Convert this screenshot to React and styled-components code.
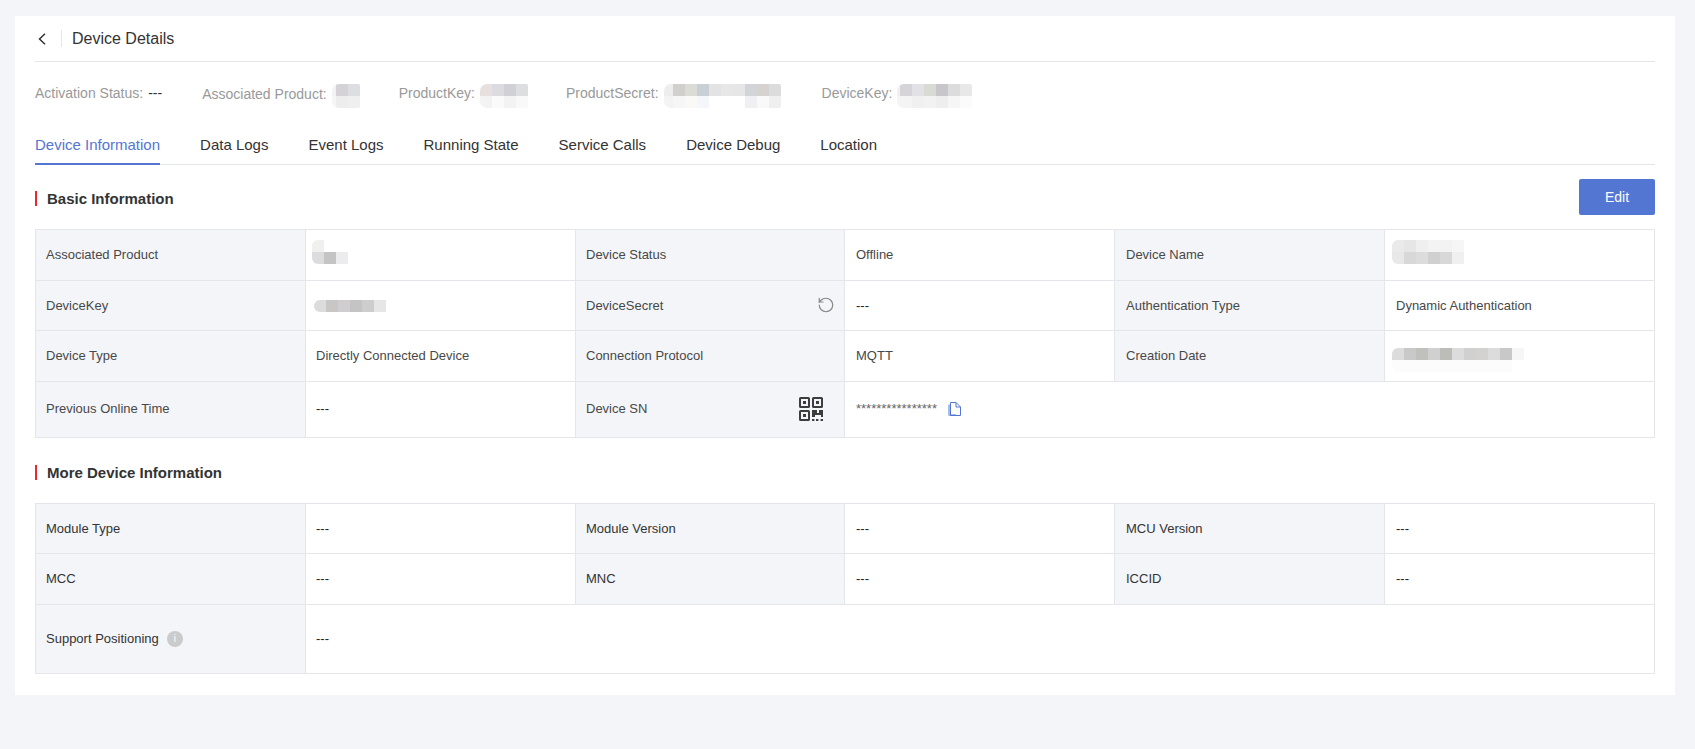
import React from "react";
import styled, { createGlobalStyle } from "styled-components";
import { RotateCcw } from "lucide-react";

const LINE = "#e4e6ec";
const BLUE = "#5476d3";

const TABS = [
  "Device Information",
  "Data Logs",
  "Event Logs",
  "Running State",
  "Service Calls",
  "Device Debug",
  "Location",
];

// pixelated regions of the screenshot, one colour per 12px cell
const BLUR = {
  metaProduct: [
    ["#f2f2f2", "#d4d2d4", "#dcdee2"],
    ["#f5f5f5", "#ededed", "#efefef"],
  ],
  metaProductKey: [
    ["#e8e0de", "#dcdce0", "#d0d0d6", "#dddee0"],
    ["#f3f3f3", "#fafafa", "#f3f3f3", "#f9f9f9"],
  ],
  metaSecret: [
    ["#ededed", "#d2d0ce", "#dcdcd6", "#c9cfd4", "#e3e3e5", "#e7e7e7", "#e6e6e6", "#d2d4d8", "#d6d2d0", "#dcdcdc"],
    ["#f3f3f3", "#f6f6f6", "#faf9f7", "#f4f6f9", "#ffffff", "#ffffff", "#ffffff", "#f0f0f2", "#f9f9f9", "#efefef"],
  ],
  metaDeviceKey: [
    ["#f0f0f0", "#d6d4d8", "#e2e2e6", "#d8dad4", "#c8c6ca", "#dcdcdc", "#e8e8e8"],
    ["#f4f4f4", "#f4f4f4", "#f0f0f0", "#f2f2f2", "#eeeeee", "#f6f6f6", "#fbfbfb"],
  ],
  product: [
    ["#f0f0ee", "#ffffff", "#ffffff"],
    ["#dcdcdf", "#c4c4c4", "#ececee"],
  ],
  deviceKey: [["#dcdcdc", "#c9c6c6", "#cfcdd0", "#c4c4c4", "#cdcdcd", "#e6e6e6"]],
  deviceName: [
    ["#eaeaea", "#e6e6e6", "#efefef", "#f3f3f3", "#f3f3f3", "#f6f6f6"],
    ["#e8e8e8", "#d8d8d8", "#dcdcdc", "#d0d0d0", "#d8d8d8", "#f0f0f0"],
  ],
  created: [
    ["#dcdcdc", "#c9c9c9", "#c0c0bc", "#d0d0d0", "#bcbcb8", "#dcdcdc", "#d0d0d0", "#d4d2d0", "#dcdcdc", "#c8c8c8", "#f6f6f6"],
    ["#fcfcfc", "#fcfcfc", "#fcfcfc", "#fcfcfc", "#fcfcfc", "#fcfcfc", "#fcfcfc", "#fcfcfc", "#fcfcfc", "#fcfcfc", "#ffffff"],
  ],
};

// crop trims pixels off the left cell, the regions don't all start on a full one
const Mosaic = ({ rows, crop = 0, className }) => {
  const width = rows[0].length * 12 - crop;
  const height = rows.length * 12;
  return (
    <MosaicSvg className={className} width={width} height={height} viewBox={`${crop} 0 ${width} ${height}`}>
      {rows.map((row, y) =>
        row.map((fill, x) => (
          <rect key={`${x}-${y}`} x={x * 12} y={y * 12} width="12" height="12" fill={fill} />
        ))
      )}
    </MosaicSvg>
  );
};

const QrIcon = () => (
  <QrSvg viewBox="0 0 24 24">
    <g fill="none" stroke="#3d3d3d" strokeWidth="2">
      <rect x="1" y="1" width="9" height="9" rx="0.6" />
      <rect x="14" y="1" width="9" height="9" rx="0.6" />
      <rect x="1" y="14" width="9" height="9" rx="0.6" />
    </g>
    <g fill="#3d3d3d">
      <rect x="4" y="4" width="3" height="3" />
      <rect x="17" y="4" width="3" height="3" />
      <rect x="4" y="17" width="3" height="3" />
      <path d="M13 13h5v3h2v-3h4v7h-2v-2h-6v2h-3z" />
      <rect x="13" y="22" width="2.4" height="2" />
      <rect x="17" y="22" width="2.4" height="2" />
      <rect x="21.6" y="22" width="2.4" height="2" />
    </g>
  </QrSvg>
);

const CopyIcon = () => (
  <CopySvg viewBox="0 0 13 14">
    <path d="M0 2.5h2.5V12H8v2H1a1 1 0 0 1-1-1z" fill="#a9bbea" />
    <path d="M2.5 .5H8l4.5 4.5v8.500H2.500z" fill="none" stroke={BLUE} />
    <path d="M8 .5V5h4.500" fill="none" stroke={BLUE} />
  </CopySvg>
);

const BackIcon = () => (
  <BackSvg viewBox="0 0 8 12">
    <path d="M7 .7 1.500 6 7 11.300" fill="none" stroke="#333" strokeWidth="1.500" />
  </BackSvg>
);

const App = () => {
  return (
    <>
      <GlobalStyle />
      <Card>
        <Header>
          <BackIcon />
          <HeaderDivider />
          <Title>Device Details</Title>
        </Header>

        <Meta>
          <MetaItem>
            <MetaLabel>Activation Status:</MetaLabel>
            <MetaValue>---</MetaValue>
          </MetaItem>
          <MetaItem $push={1}>
            <MetaLabel $drop>Associated Product:</MetaLabel>
            <MetaBlur rows={BLUR.metaProduct} crop={8} />
          </MetaItem>
          <MetaItem>
            <MetaLabel>ProductKey:</MetaLabel>
            <MetaBlur rows={BLUR.metaProductKey} />
          </MetaItem>
          <MetaItem $push={-1}>
            <MetaLabel>ProductSecret:</MetaLabel>
            <MetaBlur rows={BLUR.metaSecret} crop={3} />
          </MetaItem>
          <MetaItem $push={2}>
            <MetaLabel>DeviceKey:</MetaLabel>
            <MetaBlur rows={BLUR.metaDeviceKey} crop={9} />
          </MetaItem>
        </Meta>

        <Tabs>
          {TABS.map((tab, i) => (
            <Tab key={tab} $active={i === 0}>
              {tab}
            </Tab>
          ))}
        </Tabs>

        <SectionBar>
          <SectionTitle $inBar>Basic Information</SectionTitle>
          <EditButton>Edit</EditButton>
        </SectionBar>

        <Table $rows="51px 50px 51px 56px" $ink="#484848">
          <Label>Associated Product</Label>
          <Value>
            <CellBlur rows={BLUR.product} $left={-4} $top={-5} />
          </Value>
          <Label>Device Status</Label>
          <Value $far>Offline</Value>
          <Label $far>Device Name</Label>
          <Value $far $end>
            <CellBlur rows={BLUR.deviceName} $left={-4} $top={-5} />
          </Value>

          <Label>DeviceKey</Label>
          <Value>
            <CellBlur rows={BLUR.deviceKey} $left={-2} $top={2} />
          </Value>
          <Label>
            DeviceSecret
            <RefreshIcon size={18} strokeWidth={1.6} />
          </Label>
          <Value $far>
            <Dash>---</Dash>
          </Value>
          <Label $far>Authentication Type</Label>
          <Value $far $end>
            Dynamic Authentication
          </Value>

          <Label>Device Type</Label>
          <Value>Directly Connected Device</Value>
          <Label>Connection Protocol</Label>
          <Value $far>MQTT</Value>
          <Label $far>Creation Date</Label>
          <Value $far $end>
            <CellBlur rows={BLUR.created} $left={-4} $top={9} />
          </Value>

          <Label $lift>Previous Online Time</Label>
          <Value $lift>
            <Dash>---</Dash>
          </Value>
          <Label $lift>
            Device SN
            <QrIcon />
          </Label>
          <Value $far $lift $span={3} $end>
            <Masked>****************</Masked>
            <CopyIcon />
          </Value>
        </Table>

        <SectionTitle>More Device Information</SectionTitle>

        <Table $rows="50px 51px 69px" $tight $ink="#333">
          <Label>Module Type</Label>
          <Value>
            <Dash>---</Dash>
          </Value>
          <Label>Module Version</Label>
          <Value $far>
            <Dash>---</Dash>
          </Value>
          <Label $far>MCU Version</Label>
          <Value $far $end>
            <Dash>---</Dash>
          </Value>

          <Label>MCC</Label>
          <Value>
            <Dash>---</Dash>
          </Value>
          <Label>MNC</Label>
          <Value $far>
            <Dash>---</Dash>
          </Value>
          <Label $far>ICCID</Label>
          <Value $far $end>
            <Dash>---</Dash>
          </Value>

          <Label>
            Support Positioning
            <InfoDot>i</InfoDot>
          </Label>
          <Value $span={5} $end>
            <Dash>---</Dash>
          </Value>
        </Table>
      </Card>
    </>
  );
};

export default App;

const GlobalStyle = createGlobalStyle`
  html, body {
    margin: 0;
    background-color: #f4f5f9;
  }
  body {
    font-family: "Liberation Sans", Arial, sans-serif;
    color: #333;
  }
  * {
    box-sizing: border-box;
  }
`;

const Card = styled.div`
  margin: 16px 20px 0 15px;
  height: 679px;
  padding: 0 20px;
  background-color: #fff;
`;

const Header = styled.div`
  display: flex;
  align-items: center;
  height: 46px;
  border-bottom: 1px solid ${LINE};
`;

const BackSvg = styled.svg`
  width: 8px;
  height: 12px;
  margin-left: 3px;
`;

const HeaderDivider = styled.span`
  width: 1px;
  height: 17px;
  margin-left: 15px;
  background-color: ${LINE};
`;

const Title = styled.h1`
  margin: 0 0 0 10px;
  font-size: 16px;
  font-weight: 400;
  color: #333;
`;

const Meta = styled.div`
  display: flex;
  gap: 39px;
  height: 24px;
  margin-top: 22px;
`;

const MetaItem = styled.div`
  display: flex;
  align-items: flex-start;
  gap: 5px;
  margin-left: ${(p) => p.$push || 0}px;
  font-size: 14px;
  line-height: 18px;
`;

const MetaLabel = styled.span`
  color: #999;
  padding-top: ${(p) => (p.$drop ? "1px" : "0")};
`;

const MetaValue = styled.span`
  color: #333;
`;

const MosaicSvg = styled.svg`
  display: block;
  flex: none;
`;

const MetaBlur = styled(Mosaic)`
  border-radius: 7px 2px 2px 7px;
`;

const CellBlur = styled(Mosaic)`
  margin-left: ${(p) => p.$left}px;
  margin-top: ${(p) => p.$top}px;
  border-radius: 6px 0 0 6px;
`;

const Tabs = styled.div`
  display: flex;
  gap: 40px;
  height: 40px;
  margin-top: 17px;
  border-bottom: 1px solid ${LINE};
`;

const Tab = styled.div`
  height: 40px;
  font-size: 15px;
  line-height: 40px;
  color: ${(p) => (p.$active ? BLUE : "#333")};
  border-bottom: ${(p) => (p.$active ? `2px solid ${BLUE}` : "none")};
`;

const SectionBar = styled.div`
  display: flex;
  align-items: center;
  justify-content: space-between;
  height: 36px;
  margin-top: 14px;
`;

const SectionTitle = styled.h2`
  height: 15px;
  margin: ${(p) => (p.$inBar ? "3px 0 0" : "27px 0 0")};
  padding-left: 10px;
  border-left: 2px solid #e8282c;
  font-size: 15px;
  line-height: 15px;
  font-weight: 700;
  color: #333;
`;

const EditButton = styled.button`
  width: 76px;
  height: 36px;
  padding: 0;
  border: none;
  border-radius: 2px;
  background-color: ${BLUE};
  font-family: inherit;
  font-size: 14px;
  color: #fff;
`;

const Table = styled.div`
  display: grid;
  grid-template-columns: 270px 270px 269px 270px 270px 271px;
  grid-template-rows: ${(p) => p.$rows};
  margin-top: ${(p) => (p.$tight ? "23px" : "14px")};
  border-top: 1px solid ${LINE};
  color: ${(p) => p.$ink};
`;

const Label = styled.div`
  display: flex;
  align-items: center;
  padding: 0 0 ${(p) => (p.$lift ? "2px" : "1px")} ${(p) => (p.$far ? "11px" : "10px")};
  background-color: #f4f5f9;
  border-left: 1px solid ${LINE};
  border-bottom: 1px solid ${LINE};
  font-size: 13px;
`;

const Value = styled.div`
  display: flex;
  align-items: center;
  padding: 0 0 ${(p) => (p.$lift ? "2px" : "1px")} ${(p) => (p.$far ? "11px" : "10px")};
  grid-column: span ${(p) => p.$span || 1};
  border-left: 1px solid ${LINE};
  border-bottom: 1px solid ${LINE};
  border-right: ${(p) => (p.$end ? `1px solid ${LINE}` : "none")};
  font-size: 13px;
`;

const Dash = styled.span`
  color: #1f1f1f;
`;

const RefreshIcon = styled(RotateCcw)`
  margin-left: auto;
  margin-right: 9px;
  color: #888;
`;

const QrSvg = styled.svg`
  width: 24px;
  height: 24px;
  margin-left: auto;
  margin-right: 21px;
`;

const Masked = styled.span`
  color: #666;
`;

const CopySvg = styled.svg`
  width: 13px;
  height: 14px;
  margin-left: 11px;
`;

const InfoDot = styled.span`
  display: flex;
  align-items: center;
  justify-content: center;
  width: 16px;
  height: 16px;
  margin-left: 8px;
  border-radius: 50%;
  background-color: #cbcbcb;
  font-size: 10px;
  color: #fff;
`;
